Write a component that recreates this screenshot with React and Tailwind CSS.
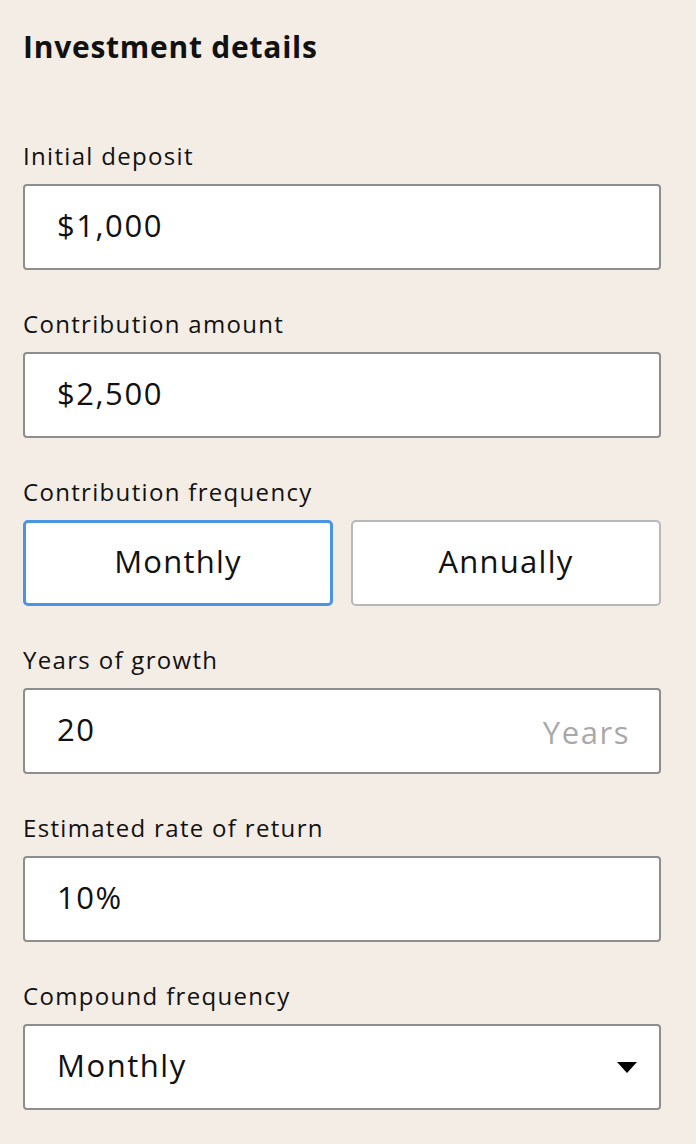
import { useState } from "react";

const fieldClass =
  "flex h-[86px] w-full items-center rounded-[4px] border-2 border-[#8e8e8e] bg-white px-[32px] pb-[3px] text-[31px] tracking-[0.05em] text-[#111]";

function Field({ label, children }) {
  return (
    <div className="mb-[40px]">
      <div className="mb-[14px] text-[24px] leading-[28px] tracking-[0.055em] text-[#111]">{label}</div>
      {children}
    </div>
  );
}

export default function App() {
  const [freq, setFreq] = useState("monthly");

  return (
    <div
      className="min-h-[1144px] w-[696px] bg-[#f4ede6] pl-[23px] pr-[35px] pt-[30px]"
      style={{ fontFamily: "'Open Sans', 'Noto Sans', sans-serif" }}
    >
      <h2 className="mb-[78px] text-[30px] font-bold leading-[34px] tracking-[0.025em] text-[#111]">
        Investment details
      </h2>

      <Field label="Initial deposit">
        <div className={fieldClass}>$1,000</div>
      </Field>

      <Field label="Contribution amount">
        <div className={fieldClass}>$2,500</div>
      </Field>

      <Field label="Contribution frequency">
        <div className="grid grid-cols-2 gap-[18px]">
          <button
            onClick={() => setFreq("monthly")}
            className={`h-[86px] rounded-[5px] bg-white pb-[3px] text-[31px] tracking-[0.04em] text-[#111] ${
              freq === "monthly" ? "border-[3px] border-[#4a95e3]" : "border-2 border-[#b8b8b8]"
            }`}
          >
            Monthly
          </button>
          <button
            onClick={() => setFreq("annually")}
            className={`h-[86px] rounded-[5px] bg-white pb-[3px] text-[31px] tracking-[0.04em] text-[#111] ${
              freq === "annually" ? "border-[3px] border-[#4a95e3]" : "border-2 border-[#b8b8b8]"
            }`}
          >
            Annually
          </button>
        </div>
      </Field>

      <Field label="Years of growth">
        <div className={`${fieldClass} justify-between`}>
          <span>20</span>
          <span className="-mr-[3px] pt-[6px] text-[#a9a9a9]">Years</span>
        </div>
      </Field>

      <Field label="Estimated rate of return">
        <div className={fieldClass}>10%</div>
      </Field>

      <Field label="Compound frequency">
        <div className={`${fieldClass} justify-between pr-[22px]`}>
          <span>Monthly</span>
          <svg width="20" height="11" viewBox="0 0 20 11" className="mt-[4px]">
            <path d="M0 0 H20 L10 11 Z" fill="#000" />
          </svg>
        </div>
      </Field>
    </div>
  );
}
